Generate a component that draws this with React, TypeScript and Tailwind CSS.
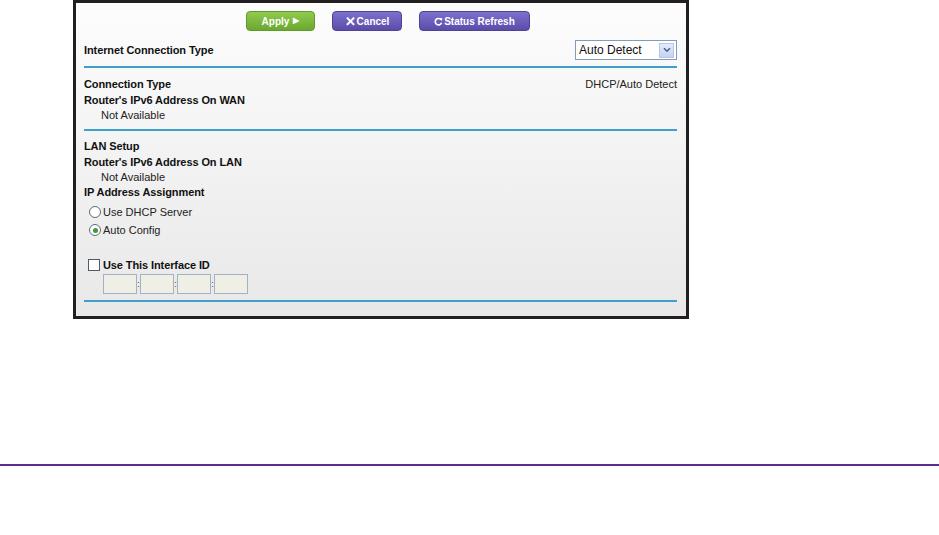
import React from "react";

const font = { fontFamily: '"Liberation Sans", Arial, sans-serif' };

function Radio({ checked, label }: { checked?: boolean; label: string }) {
  return (
    <div className="flex items-center h-[18px] pl-[5px]">
      <span className="w-[12px] h-[12px] rounded-full border border-[#5a6b7a] bg-white flex items-center justify-center shrink-0">
        {checked && <span className="w-[5px] h-[5px] rounded-full bg-[#3c9a3c]" />}
      </span>
      <span className="ml-[2px] text-[11px] text-[#222]">{label}</span>
    </div>
  );
}

function Rule() {
  return <div className="h-[2px] bg-[#3e9fcb] w-full" />;
}

export default function App() {
  return (
    <div className="w-[939px] h-[535px] bg-white relative" style={font}>
      <div className="pl-[73px] pt-0">
        <div className="w-[616px] h-[319px] border-[3px] border-[#231f20] bg-gradient-to-b from-[#fdfdfd] to-[#e8e8e8] pl-[8px] pr-[9px] flex flex-col">
          {/* buttons */}
          <div className="flex pl-[162px] gap-[17px] mt-[8px] h-[20px]">
            <div className="w-[69px] h-[20px] rounded-[4px] bg-gradient-to-b from-[#8fcb4e] to-[#6aa82f] border border-[#5f9a2a] flex items-center justify-center text-white text-[10px] font-bold">
              Apply <span className="ml-[4px] text-[8px]">▶</span>
            </div>
            <div className="w-[70px] h-[20px] rounded-[4px] bg-gradient-to-b from-[#7d70cc] to-[#5b4caa] border border-[#4d4198] flex items-center justify-center text-white text-[10px] font-bold">
              <span className="text-[13px] mr-[1px] leading-none font-black">✕</span>Cancel
            </div>
            <div className="w-[111px] h-[20px] rounded-[4px] bg-gradient-to-b from-[#7d70cc] to-[#5b4caa] border border-[#4d4198] flex items-center justify-center text-white text-[10px] font-bold">
              <svg width="9" height="9" viewBox="0 0 10 10" className="mr-[1px]">
                <path d="M8 3.2A3.6 3.6 0 1 0 8.4 6.4" stroke="white" strokeWidth="1.8" fill="none" />
                <path d="M6 1.5L9.2 1.2L8.8 4.4Z" fill="white" />
              </svg>
              Status Refresh
            </div>
          </div>

          {/* internet connection type */}
          <div className="flex items-center justify-between mt-[9px] h-[20px]">
            <span className="text-[11px] font-bold text-[#111] tracking-[-0.1px]">Internet Connection Type</span>
            <div className="w-[102px] h-[20px] border border-[#7f9db9] bg-white flex items-center justify-between pl-[3px] pr-[2px]">
              <span className="text-[12px] text-[#111]">Auto Detect</span>
              <span className="w-[15px] h-[15px] bg-gradient-to-b from-[#e4ecfb] to-[#c4d3f2] border border-[#b6c6e8] flex items-center justify-center">
                <svg width="8" height="6" viewBox="0 0 8 6">
                  <path d="M1 1.2L4 4.2L7 1.2" stroke="#4d6185" strokeWidth="1.6" fill="none" />
                </svg>
              </span>
            </div>
          </div>
          <div className="mt-[6px]"><Rule /></div>

          {/* WAN */}
          <div className="flex justify-between mt-[9px] h-[15px] items-center">
            <span className="text-[11px] font-bold text-[#111] tracking-[-0.1px]">Connection Type</span>
            <span className="text-[11px] text-[#222]">DHCP/Auto Detect</span>
          </div>
          <div className="h-[16px] flex items-center text-[11px] font-bold text-[#111] tracking-[-0.1px]">Router's IPv6 Address On WAN</div>
          <div className="h-[15px] flex items-center text-[11px] text-[#222] pl-[17px]">Not Available</div>
          <div className="mt-[6px]"><Rule /></div>

          {/* LAN */}
          <div className="mt-[8px] h-[15px] flex items-center text-[11px] font-bold text-[#111] tracking-[-0.1px]">LAN Setup</div>
          <div className="h-[16px] flex items-center text-[11px] font-bold text-[#111] tracking-[-0.1px]">Router's IPv6 Address On LAN</div>
          <div className="h-[15px] flex items-center text-[11px] text-[#222] pl-[17px]">Not Available</div>
          <div className="h-[15px] flex items-center text-[11px] font-bold text-[#111] tracking-[-0.1px]">IP Address Assignment</div>
          <div className="mt-[3px]">
            <Radio label="Use DHCP Server" />
          </div>
          <Radio checked label="Auto Config" />

          <div className="mt-[19px] flex items-center h-[14px] pl-[4px]">
            <span className="w-[12px] h-[12px] border border-[#4e5b66] bg-white shrink-0" />
            <span className="ml-[3px] text-[11px] font-bold text-[#111] tracking-[-0.1px]">Use This Interface ID</span>
          </div>
          <div className="flex items-center pl-[19px] mt-[2px]">
            {[0, 1, 2, 3].map((i) => (
              <React.Fragment key={i}>
                {i > 0 && <span className="w-[3px] text-[9px] text-[#444] text-center leading-none">:</span>}
                <div className="w-[34px] h-[20px] border border-[#9fb3c4] bg-[#efefe6]" />
              </React.Fragment>
            ))}
          </div>
          <div className="mt-[6px]"><Rule /></div>
        </div>
      </div>

      <div className="absolute left-0 top-[464px] w-full h-[2px] bg-[#5b2e8f]" />
    </div>
  );
}
